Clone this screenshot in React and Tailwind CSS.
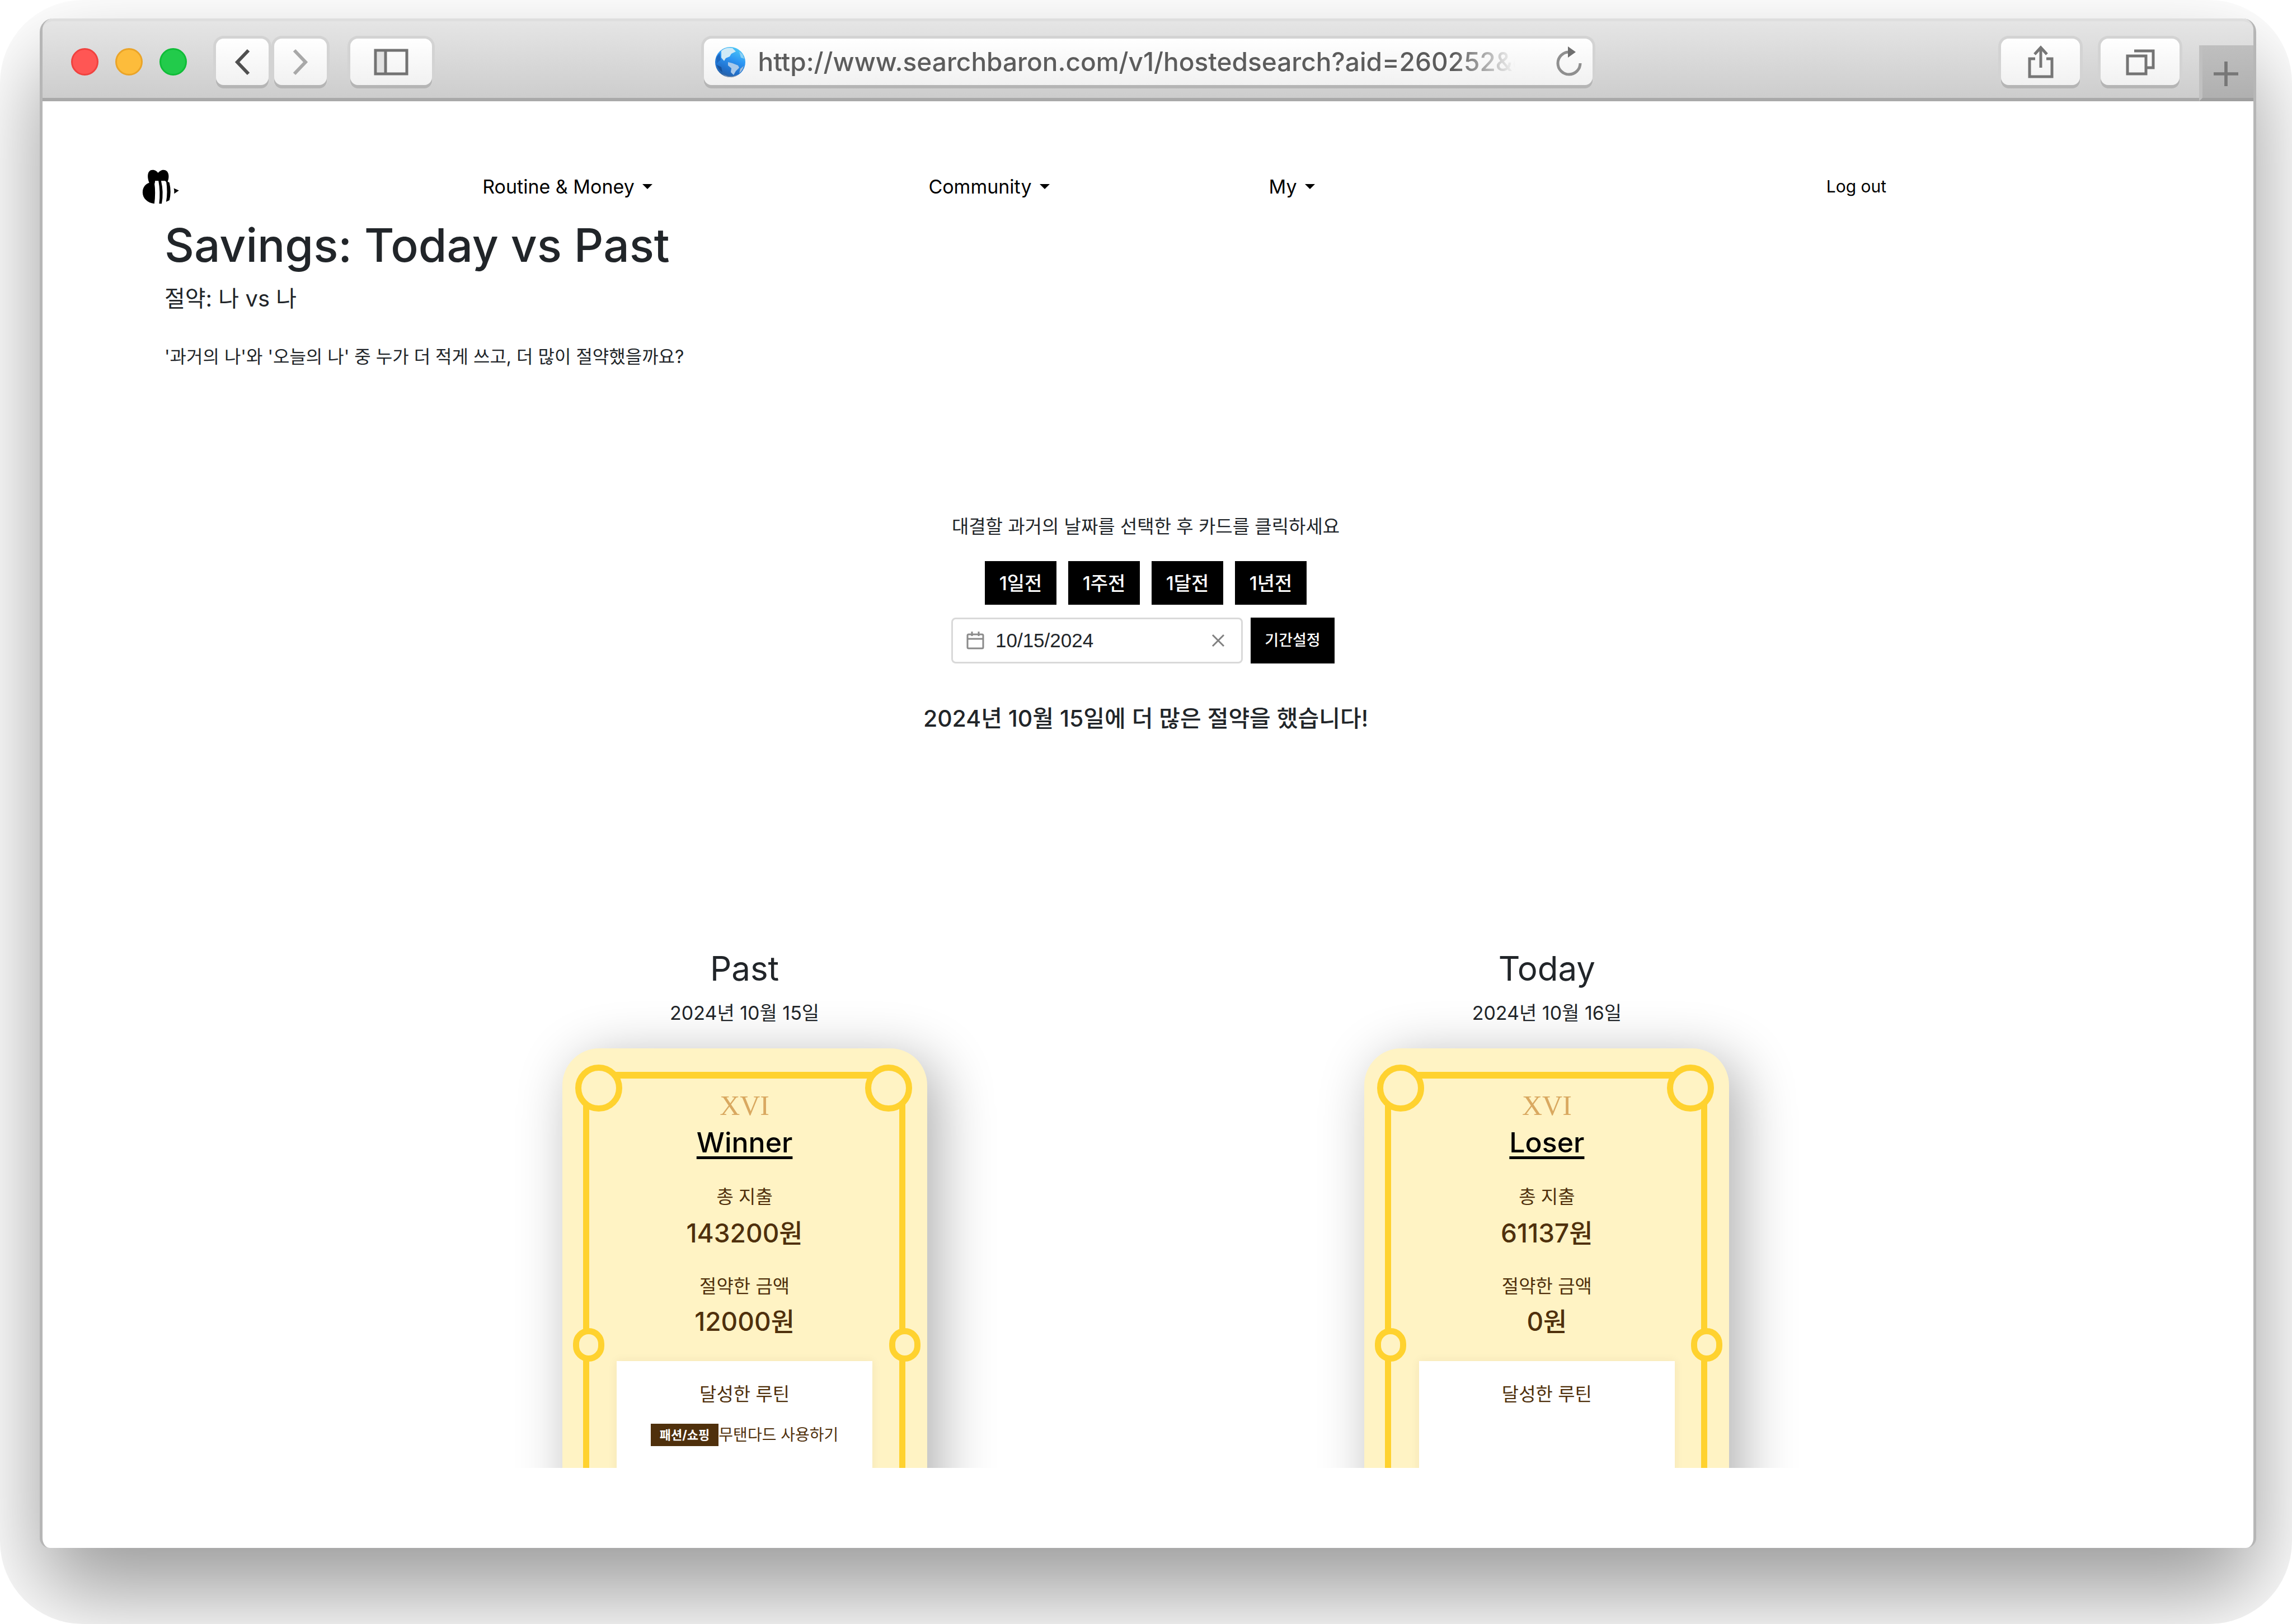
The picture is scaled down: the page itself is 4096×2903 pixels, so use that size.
import React from "react";

const latin = "font-['Inter','Noto_Sans_CJK_KR',sans-serif]";

function ChromeButton({ label, className, children }) {
  return (
    <button
      type="button"
      aria-label={label}
      className={`flex h-[83px] items-center justify-center rounded-[14px] bg-gradient-to-b from-white to-[#f1f1f1] shadow-[0_6px_0_#b5b5b5,0_0_0_5px_#d3d3d3] ${className}`}
    >
      {children}
    </button>
  );
}

function GlobeIcon() {
  return (
    <svg viewBox="0 0 56 56" className="size-14 shrink-0" aria-hidden="true">
      <defs>
        <linearGradient id="sea" x1="0.7" y1="0" x2="0.3" y2="1">
          <stop offset="0" stopColor="#4cc8f7" />
          <stop offset="0.4" stopColor="#2c95f3" />
          <stop offset="0.75" stopColor="#2170cb" />
          <stop offset="1" stopColor="#2a5f9f" />
        </linearGradient>
      </defs>
      <circle cx="28" cy="28" r="27" fill="url(#sea)" />
      <path d="M12 8 Q20 1 32 3 L38 9 L30 13 L27 18 L20 21 L17 26 L12 20 Z" fill="#cfeaf6" />
      <path d="M3 20 L9 12 L11 24 L4 30 Z" fill="#1d68c0" />
      <path d="M24 28 L32 30 L42 34 L44 38 L38 44 L34 51 L29 46 L30 39 L24 34 Z" fill="#a9c9ea" />
      <path d="M4 33 L12 37 L14 46 Q7 42 4 33 Z" fill="#17529a" />
      <path d="M44 9 L50 14 L53 22 L47 20 Z" fill="#8bd0f4" />
      <path d="M46 40 L52 35 Q50 43 44 48 Z" fill="#a3bcd8" />
      <path d="M14 49 Q28 58 42 50 Q36 56 28 55 Q20 55 14 49 Z" fill="#8b9bb0" />
    </svg>
  );
}

function BeeLogo() {
  return (
    <svg viewBox="0 0 100 93" className="h-[61px] w-[66px]" role="img" aria-label="Bee">
      <path d="M20 38 C12 20 14 1 28 1 C36 1 40 5 43 9 C47 5 51 1 58 1 C72 1 76 19 68 36 L62 31 H35 L34 38 H20 Z" fill="#000" />
      <path d="M20 35 H33 Q37 64 33 93 C15 91 1 79 1 62 C1 49 9 39 20 36 Z" fill="#000" />
      <path d="M44 29 H51 Q59 62 53 93 H46 Q50 62 44 29 Z" fill="#000" />
      <path d="M65 30 L74 36 Q80 62 74 84 L65 88 Q70 62 65 30 Z" fill="#000" />
      <path d="M86 51 L100 57 L87 66 Q88 58 86 51 Z" fill="#000" />
    </svg>
  );
}

function NavMenu({ children }) {
  return (
    <button type="button" className="flex items-center gap-[14px] justify-self-start whitespace-nowrap text-[34px] leading-[50px] text-black">
      {children}
      <svg viewBox="0 0 18 10" className="h-[10px] w-[18px]" aria-hidden="true">
        <path d="M0 0 H18 L9 9 Z" fill="#000" />
      </svg>
    </button>
  );
}

function Toolbar() {
  return (
    <header className="grid h-[148px] grid-cols-[1fr_1588px_1fr] items-center rounded-t-[20px] border-t-[5px] border-b-[6px] border-t-[#dedede] border-b-[#a9a9a9] bg-gradient-to-b from-[#e5e5e5] to-[#cdcdcd] pt-2">
      <div className="flex items-center pl-[51px]">
        <div className="flex gap-[30px]">
          <button type="button" aria-label="Close" className="size-[49px] rounded-full border-3 border-[#f0423f] bg-[#ff5654]" />
          <button type="button" aria-label="Minimize" className="size-[49px] rounded-full border-3 border-[#eaa428] bg-[#fdbc3b]" />
          <button type="button" aria-label="Zoom" className="size-[49px] rounded-full border-3 border-[#10bd38] bg-[#22cb4b]" />
        </div>
        <ChromeButton label="Back" className="ml-[52px] w-[94px]">
          <svg viewBox="0 0 30 48" className="h-12 w-[30px]" fill="none" stroke="#4f4f4f" strokeWidth="6" aria-hidden="true">
            <path d="M26 3 L6 24 L26 45" />
          </svg>
        </ChromeButton>
        <ChromeButton label="Forward" className="ml-[10px] w-[94px]">
          <svg viewBox="0 0 30 48" className="h-12 w-[30px]" fill="none" stroke="#a8a8a8" strokeWidth="6" aria-hidden="true">
            <path d="M4 3 L24 24 L4 45" />
          </svg>
        </ChromeButton>
        <ChromeButton label="Show sidebar" className="ml-[42px] w-[146px]">
          <svg viewBox="0 0 62 48" className="h-12 w-[62px]" fill="none" stroke="#737373" strokeWidth="5" aria-hidden="true">
            <path d="M6 6 H20 V42 H6 Z" fill="#e2e2e2" stroke="none" />
            <path d="M3 3 H59 V45 H3 Z M21 3 V45" />
          </svg>
        </ChromeButton>
      </div>

      <div className="flex h-[83px] items-center rounded-[14px] bg-gradient-to-b from-white to-[#f1f1f1] pr-[14px] pl-[19px] shadow-[0_6px_0_#b5b5b5,0_0_0_5px_#d3d3d3]">
        <GlobeIcon />
        <input
          type="text"
          aria-label="Address"
          defaultValue="http://www.searchbaron.com/v1/hostedsearch?aid=260252&c"
          className="ml-[22px] w-0 flex-1 bg-transparent font-['Inter',sans-serif] text-[46px] font-medium text-[#5c5c5c] outline-none [mask-image:linear-gradient(to_right,black_90%,transparent_98%)]"
        />
        <button type="button" aria-label="Reload" className="ml-[40px] shrink-0">
          <svg viewBox="0 0 56 60" className="h-[60px] w-14" fill="none" stroke="#8f8f8f" strokeWidth="5" aria-hidden="true">
            <path d="M28 12 A20 20 0 1 0 48 32" />
            <path d="M26 2 L40 12 L26 22 Z" fill="#6f6f6f" stroke="none" />
          </svg>
        </button>
      </div>

      <div className="flex items-center justify-end self-stretch">
        <ChromeButton label="Share" className="w-[141px]">
          <svg viewBox="0 0 50 62" className="h-[62px] w-[50px]" fill="none" stroke="#767676" strokeWidth="5" aria-hidden="true">
            <path d="M15 25 H5 V57 H45 V25 H35" />
            <path d="M25 41 V6 M14 17 L25 5 L36 17" />
          </svg>
        </ChromeButton>
        <ChromeButton label="Show all tabs" className="ml-[37px] w-[141px]">
          <svg viewBox="0 0 52 48" className="h-12 w-[52px]" fill="none" stroke="#747474" strokeWidth="5" aria-hidden="true">
            <path d="M3 13 H36 V45 H3 Z M15 4 H49 V34 H38" />
          </svg>
        </ChromeButton>
        <button type="button" aria-label="New tab" className="-mb-[6px] ml-[35px] flex h-[100px] w-[97px] items-center justify-center self-end border-b-[6px] border-l-[6px] border-b-[#9f9f9f] border-l-[#c0c0c0] bg-gradient-to-b from-[#bfbfbf] to-[#b0b0b0] pt-[8px] pr-[8px]">
          <svg viewBox="0 0 46 46" className="size-[44px]" stroke="#777" strokeWidth="6" aria-hidden="true">
            <path d="M23 0 V46 M0 23 H46" />
          </svg>
        </button>
      </div>
    </header>
  );
}

function Knob({ className }) {
  return <span className={`absolute rounded-full border-[11px] border-[#ffd22f] bg-[#fff3c4] ${className}`} />;
}

function ResultCard({ title, date, result, spent, saved, routines }) {
  return (
    <article className="flex flex-col items-center text-center text-[#4f300c]">
      <h3 className="text-[60px] leading-[72px] text-[#212529]">{title}</h3>
      <p className="mt-[19px] text-[34px] leading-[50px] text-[#212529]">{date}</p>
      <div className="relative mt-[38px] -mb-[200px] flex w-[652px] flex-1 flex-col items-center rounded-t-[66px] bg-[#fff3c4] pt-[70px] shadow-[20px_20px_100px_rgba(0,0,0,0.32)]">
        <span className="absolute top-[42px] right-[39px] bottom-0 left-[37px] border-x-[11px] border-t-[12px] border-[#ffd22f]" />
        <Knob className="top-[29px] left-[23px] size-[84px]" />
        <Knob className="top-[29px] right-[27px] size-[84px]" />
        <Knob className="top-[500px] left-[19px] h-[60px] w-[56px]" />
        <Knob className="top-[500px] right-[12px] h-[60px] w-[56px]" />
        <p className="font-['Liberation_Serif',serif] text-[50px] leading-[64px] text-[#d9a860]">XVI</p>
        <h4 className="mt-[2px] text-[50px] leading-[64px] font-medium text-black underline decoration-[5px] underline-offset-[7px]">{result}</h4>
        <p className="mt-10 text-[33px] leading-[50px]">총 지출</p>
        <p className="mt-2 text-[46px] leading-[64px] font-medium">{spent}</p>
        <p className="mt-[38px] text-[33px] leading-[50px]">절약한 금액</p>
        <p className="mt-[6px] text-[46px] leading-[64px] font-medium">{saved}</p>
        <div className="relative mt-[39px] flex w-[70%] flex-1 flex-col items-center bg-white pt-[34px] pb-[239px] shadow-[0_0_16px_rgba(79,48,12,0.07)]">
          <p className="text-[33px] leading-[50px]">달성한 루틴</p>
          <ul className="mt-[28px]">
            {routines.map((r) => (
              <li key={r.name} className="flex items-center whitespace-nowrap text-[28px] leading-[40px]">
                <span className="bg-[#4f300c] px-4 text-[22px] font-bold text-white">{r.tag}</span>
                {r.name}
              </li>
            ))}
          </ul>
        </div>
      </div>
    </article>
  );
}

export default function App() {
  return (
    <div className={`flex min-h-screen w-full flex-col overflow-hidden rounded-[148px] bg-white pt-[33px] pr-[64px] pb-[136px] pl-[71px] ${latin}`}>
      <div className="flex flex-1 flex-col rounded-t-[24px] rounded-b-[18px] border-x-[5px] border-[#b6b6b6] bg-white shadow-[0_80px_160px_rgba(0,0,0,0.4)]">
        <Toolbar />
        <div className="flex flex-1 flex-col pt-[122px]">
          <nav className="grid grid-cols-[608fr_797fr_608fr_996fr_600fr] items-center pr-[163px] pl-[178px]">
            <a href="#home" className="justify-self-start"><BeeLogo /></a>
            <NavMenu>Routine &amp; Money</NavMenu>
            <NavMenu>Community</NavMenu>
            <NavMenu>My</NavMenu>
            <a href="#logout" className="text-[30px] text-black">Log out</a>
          </nav>

          <main className="flex flex-col pr-[8px] text-[#212529]">
            <div className="mt-5 pl-[218px]">
              <h1 className="text-[82px] leading-[110px] font-medium">Savings: Today vs Past</h1>
              <h2 className="mt-[10px] text-[40px] leading-[60px]">절약: 나 vs 나</h2>
              <p className="mt-[49px] text-[32px] leading-[50px]">'과거의 나'와 '오늘의 나' 중 누가 더 적게 쓰고, 더 많이 절약했을까요?</p>
            </div>

            <section className="mt-[253px] flex flex-col items-center">
              <p className="text-[33px] leading-[50px]">대결할 과거의 날짜를 선택한 후 카드를 클릭하세요</p>
              <div className="mt-[37px] flex gap-[21px]">
                {["1일전", "1주전", "1달전", "1년전"].map((t) => (
                  <button key={t} type="button" className="h-[78px] w-[128px] bg-black text-[34px] font-medium text-white">{t}</button>
                ))}
              </div>
              <div className="mt-[23px] flex gap-[14px] pr-[10px]">
                <div className="flex h-[82px] w-[521px] items-center rounded-[8px] border-3 border-[#d9d9d9] bg-white pr-[29px] pl-[24px]">
                  <svg viewBox="0 0 32 34" className="h-[34px] w-8" fill="none" stroke="#8a8a8a" strokeWidth="3" aria-hidden="true">
                    <rect x="2" y="6" width="28" height="25" rx="2" />
                    <path d="M2 14 H30 M10 1 V9 M22 1 V9" />
                  </svg>
                  <input type="text" aria-label="Date" defaultValue="10/15/2024" className="ml-[20px] w-0 flex-1 bg-transparent font-['Liberation_Sans',sans-serif] text-[35px] text-[#212529] outline-none" />
                  <button type="button" aria-label="Clear date">
                    <svg viewBox="0 0 24 24" className="size-6" stroke="#808080" strokeWidth="3" aria-hidden="true">
                      <path d="M2 2 L22 22 M22 2 L2 22" />
                    </svg>
                  </button>
                </div>
                <button type="button" className="h-[82px] w-[150px] bg-black text-[27px] font-medium text-white">기간설정</button>
              </div>
              <p className="mt-[66px] text-[41px] leading-[64px] font-medium">2024년 10월 15일에 더 많은 절약을 했습니다!</p>
            </section>

            <section className="overflow-hidden pt-[379px]">
              <div className="mx-auto grid w-8/11 grid-cols-2">
                <ResultCard title="Past" date="2024년 10월 15일" result="Winner" spent="143200원" saved="12000원" routines={[{ tag: "패션/쇼핑", name: "무탠다드 사용하기" }]} />
                <ResultCard title="Today" date="2024년 10월 16일" result="Loser" spent="61137원" saved="0원" routines={[]} />
              </div>
            </section>
          </main>
        </div>
      </div>
    </div>
  );
}
